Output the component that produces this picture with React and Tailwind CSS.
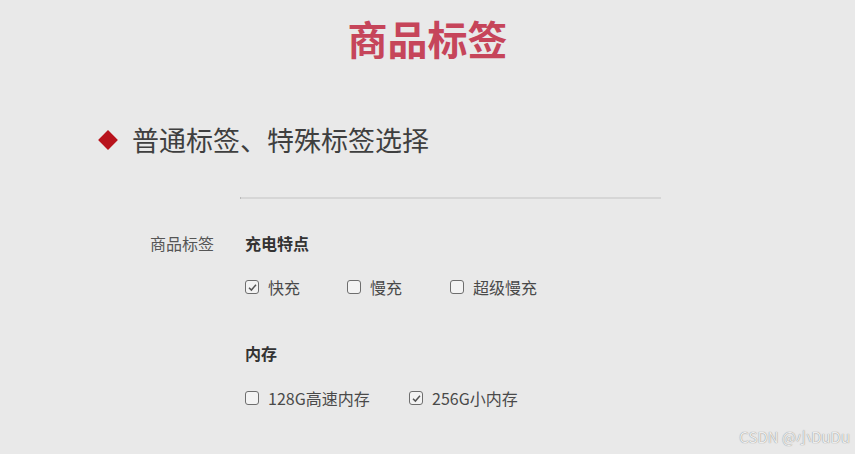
import React from "react";

const FONT = { fontFamily: '"Noto Sans CJK SC", "Noto Sans", sans-serif' };

function Box({ checked }) {
  return (
    <span className="inline-flex h-[14px] w-[14px] items-center justify-center rounded-[3px] border border-[#6e6e6e] bg-[#f3f3f3]">
      {checked && (
        <svg viewBox="0 0 12 12" className="h-[11px] w-[11px]">
          <path d="M2.2 6.2 L4.8 8.8 L9.8 3" fill="none" stroke="#555" strokeWidth="1.6" />
        </svg>
      )}
    </span>
  );
}

function Option({ label, checked, width }) {
  return (
    <label className="flex items-center gap-[9px] text-[16px] leading-[20px] text-[#4a4a4a]" style={{ width }}>
      <Box checked={checked} />
      <span>{label}</span>
    </label>
  );
}

export default function App() {
  return (
    <div className="relative h-[454px] w-[855px] overflow-hidden bg-[#e9e9e9]" style={FONT}>
      <h1 className="pt-[12px] text-center text-[40px] font-bold leading-[52px] text-[#c6455a]">商品标签</h1>

      <div className="mt-[58px] flex items-center pl-[101px]">
        <span className="h-[14px] w-[14px] rotate-45 bg-[#b8131c]" />
        <span className="ml-[17px] text-[27px] leading-[36px] text-[#3f3f3f]">普通标签、特殊标签选择</span>
      </div>

      <div className="ml-[240px] mt-[39px] h-[2px] w-[421px] border-l border-[#bbb] bg-[#d6d6d6]" />

      <div className="mt-[34px] flex">
        <div className="w-[95px] pl-[150px] box-content text-[16px] leading-[20px] text-[#555]">
          <span className="whitespace-nowrap">商品标签</span>
        </div>
        <div className="flex flex-col">
          <div className="text-[16px] font-bold leading-[20px] text-[#333]">充电特点</div>
          <div className="mt-[24px] flex items-center">
            <Option label="快充" checked width={102} />
            <Option label="慢充" width={103} />
            <Option label="超级慢充" />
          </div>
          <div className="mt-[46px] text-[16px] font-bold leading-[20px] text-[#333]">内存</div>
          <div className="mt-[25px] flex items-center">
            <Option label="128G高速内存" width={164} />
            <Option label="256G小内存" checked />
          </div>
        </div>
      </div>

      <div className="absolute bottom-[6px] right-[5px] text-[15px] text-[#ededed] [text-shadow:0_0_1px_#6f6f6f]">
        CSDN @小DuDu
      </div>
    </div>
  );
}
